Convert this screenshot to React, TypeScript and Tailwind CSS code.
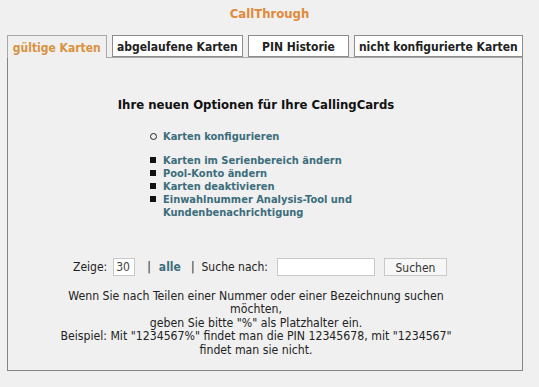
import React from 'react';

const tabs = [
  { label: 'gültige Karten', active: true, w: 'w-[100px]' },
  { label: 'abgelaufene Karten', active: false, w: 'w-[132px]' },
  { label: 'PIN Historie', active: false, w: 'w-[101px]' },
  { label: 'nicht konfigurierte Karten', active: false, w: 'w-[170px]' },
];

const options = [
  'Karten im Serienbereich ändern',
  'Pool-Konto ändern',
  'Karten deaktivieren',
  'Einwahlnummer Analysis-Tool und Kundenbenachrichtigung',
];

const App: React.FC = () => {
  return (
    <div className="min-h-[387px] w-[539px] bg-[#f0f0f0] font-['DejaVu_Sans_Condensed','DejaVu_Sans',sans-serif] text-[11px] text-[#222]">
      <h1 className="pt-[6px] text-center text-[13px] font-bold leading-4 text-[#e08a3b]">CallThrough</h1>

      <div className="ml-[7px] mt-[13px] w-[516px]">
        {/* Tabs */}
        <div className="flex gap-[5px]">
          {tabs.map((t) =>
            t.active ? (
              <div
                key={t.label}
                className={`${t.w} relative z-10 -mb-px flex h-[23px] items-center justify-center border border-b-0 border-[#a8a8a8] bg-[#f0f0f0] pt-[2px] text-[12px] font-bold text-[#d9923f]`}
              >
                {t.label}
              </div>
            ) : (
              <div
                key={t.label}
                className={`${t.w} flex h-[22px] items-center justify-center border border-[#8c8c8c] bg-white pt-[2px] text-[12px] font-bold text-[#222]`}
              >
                {t.label}
              </div>
            )
          )}
        </div>

        {/* Panel */}
        <div className="h-[314px] border border-[#858585] border-t-[#a8a8a8]">
          <div className="ml-[10px] w-[476px]">
            <h2 className="mt-[39px] text-center text-[13px] font-bold leading-4 text-[#111]">
              Ihre neuen Optionen für Ihre CallingCards
            </h2>

            <div className="ml-[132px] mt-[17px] text-[11px] font-bold leading-[13px] text-[#3c6d7c]">
              <div className="flex items-center">
                <span className="mr-[6px] inline-block h-[7px] w-[7px] rounded-full border border-[#222]" />
                Karten konfigurieren
              </div>
              <ul className="mt-[11px]">
                {options.map((o) => (
                  <li key={o} className="flex items-start">
                    <span className="mr-[7px] mt-[3px] inline-block h-[6px] w-[6px] shrink-0 bg-[#111]" />
                    <span className="w-[200px]">{o}</span>
                  </li>
                ))}
              </ul>
            </div>

            {/* Search row */}
            <div className="mt-[39px] flex items-center justify-center gap-[6px] pl-[8px] text-[12px] text-[#222]">
              <span>Zeige:</span>
              <input
                defaultValue="30"
                className="h-[18px] w-[22px] border border-[#c9c9c9] bg-white px-[2px] text-[12px] text-[#444] outline-none"
              />
              <span className="ml-[6px] text-[#222]">|</span>
              <span className="ml-[2px] font-bold text-[#3c6d7c]">alle</span>
              <span className="ml-[4px] text-[#222]">|</span>
              <span className="ml-[1px]">Suche nach:</span>
              <input className="ml-[3px] h-[18px] w-[98px] border border-[#c9c9c9] bg-white outline-none" />
              <button className="ml-[3px] h-[18px] w-[63px] border border-[#c9c9c9] bg-[#f7f7f7] text-[12px] text-[#333]">
                Suchen
              </button>
            </div>

            <p className="mx-auto mt-[14px] w-[400px] text-center text-[12.2px] leading-[13.4px] text-[#222]">
              Wenn Sie nach Teilen einer Nummer oder einer Bezeichnung suchen möchten,
              <br />
              geben Sie bitte "%" als Platzhalter ein.
              <br />
              Beispiel: Mit "1234567%" findet man die PIN 12345678, mit "1234567" findet man sie nicht.
            </p>
          </div>
        </div>
      </div>
    </div>
  );
};

export default App;
